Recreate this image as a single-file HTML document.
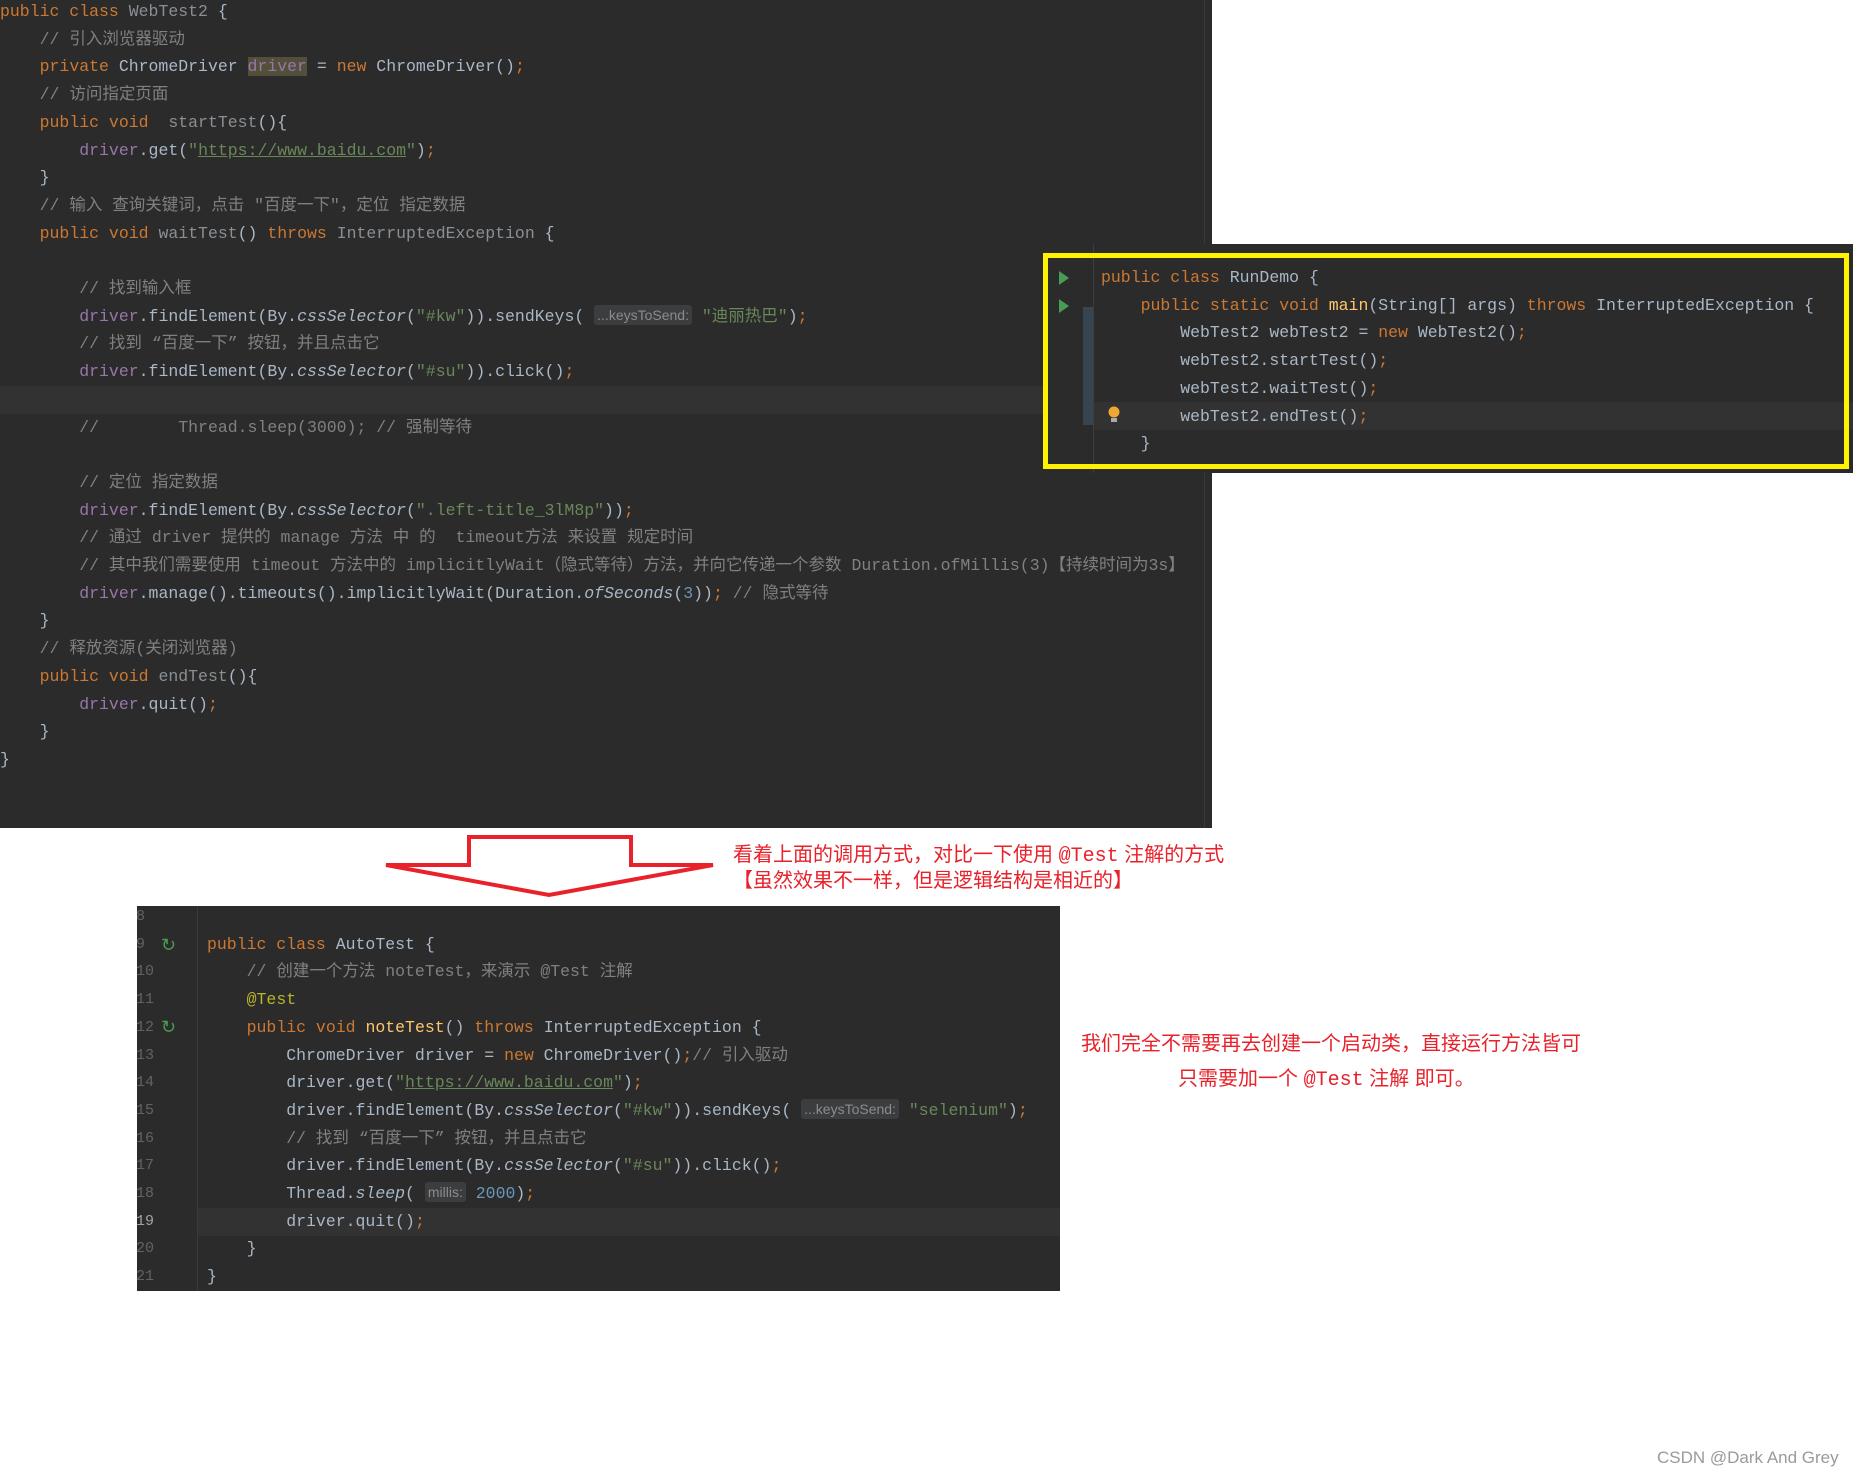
<!DOCTYPE html>
<html><head><meta charset="utf-8">
<style>
*{margin:0;padding:0;box-sizing:border-box}
body{width:1857px;height:1475px;background:#fff;position:relative;overflow:hidden;font-family:"Liberation Mono","Noto Sans CJK SC",monospace}
.p{position:absolute;background:#2b2b2b;overflow:hidden}
pre{position:absolute;font-family:"Liberation Mono","Noto Sans CJK SC",monospace;font-size:16.5px;line-height:27.7px;color:#a9b7c6;white-space:pre}
.k{color:#cc7832}.c{color:#808080}.s{color:#6a8759}.f{color:#9876aa}.m{color:#ffc66d}.a{color:#bbb529}.n{color:#6897bb}.g{color:#8a8f94}
.u{text-decoration:underline}
i{font-style:italic}
.h{display:inline-block;background:#3b3d3e;color:#8c8c8c;font-family:"Liberation Sans",sans-serif;font-size:14px;line-height:20px;padding:0 3px;border-radius:3px;vertical-align:1px}
.hl{position:absolute;background:#323232}
.red{position:absolute;color:#e8212a;font-family:"Liberation Sans","Noto Sans CJK SC",sans-serif;font-size:20px;white-space:nowrap}
.red span{font-family:"Liberation Mono",monospace}
</style></head><body>

<div class="p" style="left:0;top:0;width:1212px;height:828px">
<div class="hl" style="left:0;top:386px;width:1212px;height:28px"></div>
<div style="position:absolute;left:1204px;top:0;width:1px;height:828px;background:#3a3a3a"></div>
<pre style="left:0;top:-2px"><span class="k">public class</span> <span class="g">WebTest2</span> {
    <span class="c">// 引入浏览器驱动</span>
    <span class="k">private</span> ChromeDriver <span class="f" style="background:#52503a">driver</span> = <span class="k">new</span> ChromeDriver()<span class="k">;</span>
    <span class="c">// 访问指定页面</span>
    <span class="k">public void</span>  <span class="g">startTest</span>(){
        <span class="f">driver</span>.get(<span class="s">"<span class="u">https://www.baidu.com</span>"</span>)<span class="k">;</span>
    }
    <span class="c">// 输入 查询关键词，点击 "百度一下"，定位 指定数据</span>
    <span class="k">public void</span> <span class="g">waitTest</span>() <span class="k">throws</span> <span class="g">InterruptedException</span> {

        <span class="c">// 找到输入框</span>
        <span class="f">driver</span>.findElement(By.<i>cssSelector</i>(<span class="s">"#kw"</span>)).sendKeys( <span class="h">...keysToSend:</span> <span class="s">"迪丽热巴"</span>)<span class="k">;</span>
        <span class="c">// 找到 “百度一下” 按钮，并且点击它</span>
        <span class="f">driver</span>.findElement(By.<i>cssSelector</i>(<span class="s">"#su"</span>)).click()<span class="k">;</span>

        <span class="c">//        Thread.sleep(3000); // 强制等待</span>

        <span class="c">// 定位 指定数据</span>
        <span class="f">driver</span>.findElement(By.<i>cssSelector</i>(<span class="s">".left-title_3lM8p"</span>))<span class="k">;</span>
        <span class="c">// 通过 driver 提供的 manage 方法 中 的  timeout方法 来设置 规定时间</span>
        <span class="c">// 其中我们需要使用 timeout 方法中的 implicitlyWait（隐式等待）方法，并向它传递一个参数 Duration.ofMillis(3)【持续时间为3s】</span>
        <span class="f">driver</span>.manage().timeouts().implicitlyWait(Duration.<i>ofSeconds</i>(<span class="n">3</span>))<span class="k">;</span> <span class="c">// 隐式等待</span>
    }
    <span class="c">// 释放资源(关闭浏览器)</span>
    <span class="k">public void</span> <span class="g">endTest</span>(){
        <span class="f">driver</span>.quit()<span class="k">;</span>
    }
}</pre>
</div>

<div class="p" style="left:1043px;top:244px;width:810px;height:229px">
<div class="hl" style="left:50px;top:158px;width:760px;height:28px"></div>
<div style="position:absolute;left:40px;top:63px;width:10px;height:118px;background:#36454f"></div>
<div style="position:absolute;left:50px;top:0;width:1px;height:229px;background:#3c3f41"></div>
<svg style="position:absolute;left:14px;top:25px" width="14" height="60"><polygon points="2,2 12,9 2,16" fill="#499c54"/><polygon points="2,30 12,37 2,44" fill="#499c54"/></svg>
<svg style="position:absolute;left:64px;top:161px" width="14" height="22"><circle cx="7" cy="7" r="5.5" fill="#f0a732"/><rect x="4" y="13" width="6" height="4" fill="#aaa"/></svg>
<pre style="left:58px;top:20px"><span class="k">public class</span> RunDemo {
    <span class="k">public static void</span> <span class="m">main</span>(String[] args) <span class="k">throws</span> InterruptedException {
        WebTest2 webTest2 = <span class="k">new</span> WebTest2()<span class="k">;</span>
        webTest2.startTest()<span class="k">;</span>
        webTest2.waitTest()<span class="k">;</span>
        webTest2.endTest()<span class="k">;</span>
    }</pre>
<div style="position:absolute;left:0;top:9px;width:806px;height:216px;border:5px solid #fff200"></div>
</div>

<svg style="position:absolute;left:380px;top:830px" width="340" height="72"><polygon points="6,35 89,35 89,7 251,7 251,35 333,35 169,65" fill="#fff" stroke="#e8212a" stroke-width="4"/></svg>
<div class="red" style="left:733px;top:838px">看着上面的调用方式，对比一下使用 <span>@Test</span> 注解的方式</div>
<div class="red" style="left:733px;top:864px">【虽然效果不一样，但是逻辑结构是相近的】</div>

<div class="p" style="left:137px;top:906px;width:923px;height:385px">
<div class="hl" style="left:60px;top:302px;width:863px;height:28px"></div>
<div style="position:absolute;left:60px;top:0;width:1px;height:385px;background:#3a3a3a"></div>
<pre style="left:-1px;top:-3px;color:#606366;font-size:15px">8
9
10
11
12
13
14
15
16
17
18
<span style="color:#a4a3a3">19</span>
20
21</pre>
<svg style="position:absolute;left:24px;top:29px" width="18" height="100"><text x="0" y="16" fill="#499c54" font-size="18" font-family="Liberation Sans">↻</text><text x="0" y="98" fill="#499c54" font-size="18" font-family="Liberation Sans">↻</text></svg>
<pre style="left:70px;top:-3px">&#8203;
<span class="k">public class</span> AutoTest {
    <span class="c">// 创建一个方法 noteTest，来演示 @Test 注解</span>
    <span class="a">@Test</span>
    <span class="k">public void</span> <span class="m">noteTest</span>() <span class="k">throws</span> InterruptedException {
        ChromeDriver driver = <span class="k">new</span> ChromeDriver()<span class="k">;</span><span class="c">// 引入驱动</span>
        driver.get(<span class="s">"<span class="u">https://www.baidu.com</span>"</span>)<span class="k">;</span>
        driver.findElement(By.<i>cssSelector</i>(<span class="s">"#kw"</span>)).sendKeys( <span class="h">...keysToSend:</span> <span class="s">"selenium"</span>)<span class="k">;</span>
        <span class="c">// 找到 “百度一下” 按钮，并且点击它</span>
        driver.findElement(By.<i>cssSelector</i>(<span class="s">"#su"</span>)).click()<span class="k">;</span>
        Thread.<i>sleep</i>( <span class="h">millis:</span> <span class="n">2000</span>)<span class="k">;</span>
        driver.quit()<span class="k">;</span>
    }
}</pre>
</div>

<div class="red" style="left:1081px;top:1027px">我们完全不需要再去创建一个启动类，直接运行方法皆可</div>
<div class="red" style="left:1178px;top:1062px">只需要加一个 <span>@Test</span> 注解 即可。</div>

<div style="position:absolute;left:1657px;top:1448px;color:#9a9a9a;font-family:'Liberation Sans',sans-serif;font-size:17px">CSDN @Dark And Grey</div>
</body></html>
